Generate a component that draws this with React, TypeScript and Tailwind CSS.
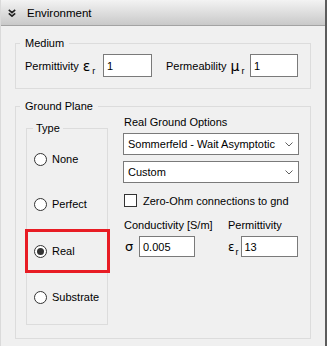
import React from "react";

function Radio({ label, checked }: { label: string; checked?: boolean }) {
  return (
    <div className="flex items-center h-[14px] pl-[7px]">
      <span className="w-[13px] h-[13px] rounded-full border border-[#333] bg-white flex items-center justify-center shrink-0">
        {checked && <span className="w-[7px] h-[7px] rounded-full bg-[#333]" />}
      </span>
      <span className="ml-[5px]">{label}</span>
    </div>
  );
}

function Combo({ value }: { value: string }) {
  return (
    <div className="h-[22px] bg-white border border-[#7a7a7a] flex items-center justify-between pl-[4px] pr-[5px]">
      <span>{value}</span>
      <svg width="8" height="5" viewBox="0 0 8 5">
        <path d="M0.5 0.5 L4 4 L7.5 0.5" fill="none" stroke="#606060" strokeWidth="1" />
      </svg>
    </div>
  );
}

function Field({ value, className }: { value: string; className: string }) {
  return (
    <div className={`bg-white border border-[#7a7a7a] flex items-center pl-[3px] ${className}`}>
      {value}
    </div>
  );
}

export default function App() {
  return (
    <div className="w-[327px] h-[346px] flex bg-[#f0f0f0] font-['Liberation_Sans',Arial,sans-serif] text-[11px] leading-[14px] text-black overflow-hidden">
      <div className="flex-1 flex flex-col border-l border-[#dadada]">
        {/* header */}
        <div className="h-[26px] shrink-0 flex items-center border-b border-[#a3a3a3] bg-linear-to-b from-[#f3f3f3] to-[#c9c9c9] pl-[7px]">
          <svg width="8" height="8" viewBox="0 0 8 8">
            <path d="M0.8 0.8 L4 3.6 L7.2 0.8 M0.8 4.4 L4 7.2 L7.2 4.4" fill="none" stroke="#222" strokeWidth="1.6" />
          </svg>
          <span className="ml-[11px] text-[11.5px]">Environment</span>
        </div>

        {/* medium */}
        <fieldset className="mt-[10px] ml-[14px] w-[296px] border border-[#dcdcdc] p-0">
          <legend className="ml-[4px] px-[5px]">Medium</legend>
          <div className="mt-[4px] mb-[11px] pl-[9px] flex items-center">
            <div className="w-[78px] flex items-center">
              <span>Permittivity</span>
              <span className="ml-[4px] font-['DejaVu_Sans'] text-[14px] leading-[14px]">ε</span>
              <span className="ml-[2px] text-[9px] relative top-[5px]">r</span>
            </div>
            <Field value="1" className="w-[49px] h-[23px]" />
            <div className="ml-[14px] w-[84px] flex items-center">
              <span>Permeability</span>
              <span className="ml-[4px] font-['DejaVu_Sans'] text-[14px] leading-[14px]">μ</span>
              <span className="ml-[2px] text-[9px] relative top-[5px]">r</span>
            </div>
            <Field value="1" className="w-[48px] h-[23px]" />
          </div>
        </fieldset>

        {/* ground plane */}
        <fieldset className="mt-[10px] ml-[14px] w-[296px] border border-[#dcdcdc] p-0">
          <legend className="ml-[4px] px-[5px]">Ground Plane</legend>
          <div className="flex items-start pl-[10px] pb-[13px]">
            <fieldset className="mt-[8px] w-[82px] border border-[#dcdcdc] p-0 pb-[20px]">
              <legend className="ml-[6px] px-[3px]">Type</legend>
              <div className="mt-[17px]">
                <Radio label="None" />
              </div>
              <div className="mt-[31px]">
                <Radio label="Perfect" />
              </div>
              <div className="mt-[33px] relative">
                <Radio label="Real" checked />
                <div className="absolute -left-[2px] -top-[15px] w-[85px] h-[44px] border-[3px] border-[#e81c24]" />
              </div>
              <div className="mt-[32px]">
                <Radio label="Substrate" />
              </div>
            </fieldset>

            <div className="ml-[15px] mt-[2px] w-[176px] flex flex-col">
              <div className="pl-[1px]">Real Ground Options</div>
              <div className="mt-[4px]">
                <Combo value="Sommerfeld - Wait Asymptotic" />
              </div>
              <div className="mt-[6px]">
                <Combo value="Custom" />
              </div>
              <div className="mt-[11px] flex items-center h-[13px] pl-[1px]">
                <span className="w-[13px] h-[13px] border border-[#333] bg-white shrink-0" />
                <span className="ml-[6px]">Zero-Ohm connections to gnd</span>
              </div>
              <div className="mt-[11px] grid grid-cols-[105px_71px]">
                <span className="pl-[1px]">Conductivity [S/m]</span>
                <span>Permittivity</span>
              </div>
              <div className="mt-[4px] grid grid-cols-[105px_71px] items-center">
                <div className="flex items-center pl-[2px]">
                  <span className="w-[14px] font-['DejaVu_Sans'] text-[13px]">σ</span>
                  <Field value="0.005" className="w-[56px] h-[21px]" />
                </div>
                <div className="flex items-center">
                  <span className="font-['DejaVu_Sans'] text-[12px]">ε</span>
                  <span className="text-[9px] relative top-[5px] ml-[1px]">r</span>
                  <Field value="13" className="ml-[2px] w-[57px] h-[21px]" />
                </div>
              </div>
            </div>
          </div>
        </fieldset>
      </div>
      <div className="w-[2px] bg-[#5c5c5c]" />
    </div>
  );
}
